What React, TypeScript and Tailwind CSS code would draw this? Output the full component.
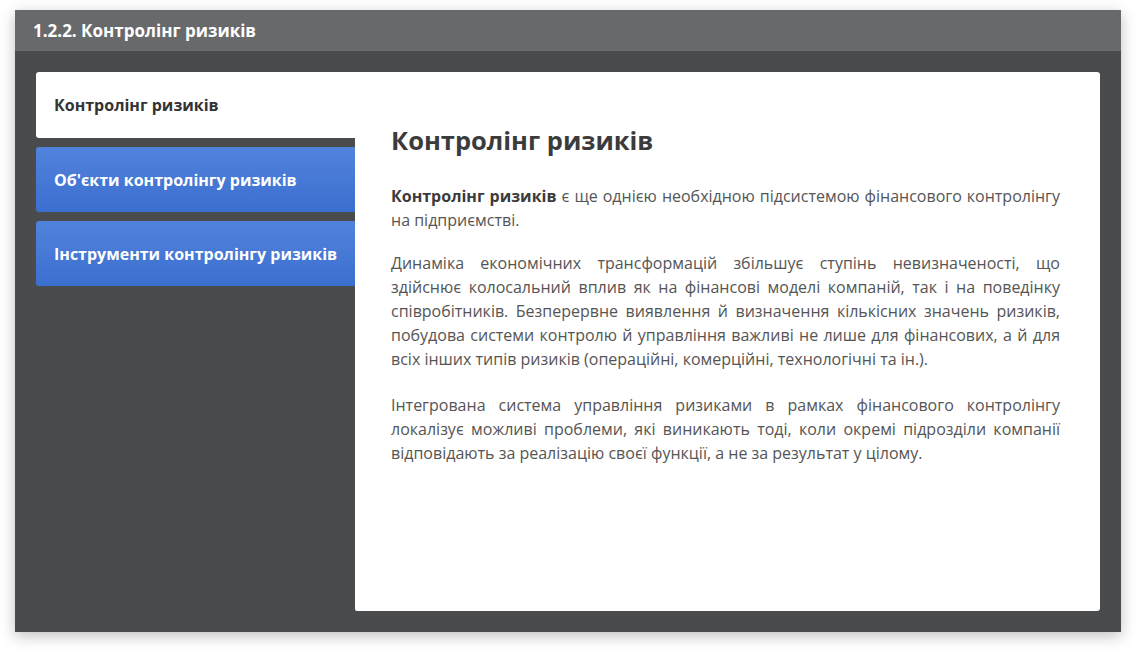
import React from "react";

const tabs = ["Контролінг ризиків", "Об'єкти контролінгу ризиків", "Інструменти контролінгу ризиків"];

export default function App() {
  return (
    <div className="min-h-screen bg-white pl-[15px] pt-[10px]" style={{ fontFamily: '"Open Sans", "Noto Sans", sans-serif' }}>
      <div className="w-[1106px] h-[622px] bg-[#4a4b4d] flex flex-col shadow-[0_4px_14px_rgba(0,0,0,0.25)]">
        <header className="h-[41px] bg-[#67696b] flex items-center px-[18px] shrink-0">
          <h1 className="text-white font-bold text-[17px]">1.2.2. Контролінг ризиків</h1>
        </header>

        <div className="flex flex-1 pt-[21px] pb-[21px] pl-[21px] pr-[21px]">
          <nav className="w-[319px] flex flex-col gap-[9px] shrink-0">
            {tabs.map((t, i) =>
              i === 0 ? (
                <div key={t} className="h-[66px] bg-white rounded-l-[3px] flex items-center pl-[18px] text-[16px] font-bold text-[#333]">
                  {t}
                </div>
              ) : (
                <div
                  key={t}
                  className="h-[65px] rounded-l-[3px] flex items-center pl-[18px] text-[16px] font-bold text-white bg-gradient-to-b from-[#5283dc] to-[#3b6fcf]"
                >
                  {t}
                </div>
              )
            )}
          </nav>

          <main className="flex-1 bg-white rounded-r-[3px] rounded-bl-[2px] pl-[36px] pr-[40px] pt-[50px]">
            <h2 className="text-[25.5px] leading-[36px] font-bold text-[#3b3b3b] mb-[26px]">Контролінг ризиків</h2>
            <div className="text-[16px] leading-[24px] text-[#555] text-justify">
              <p className="mb-[19px]">
                <b className="text-[#3b3b3b]">Контролінг ризиків</b> є ще однією необхідною підсистемою фінансового контролінгу на підприємстві.
              </p>
              <p className="mb-[22px]">
                Динаміка економічних трансформацій збільшує ступінь невизначеності, що здійснює колосальний вплив як на фінансові моделі компаній, так і на поведінку співробітників. Безперервне виявлення й визначення кількісних значень ризиків, побудова системи контролю й управління важливі не лише для фінансових, а й для всіх інших типів ризиків (операційні, комерційні, технологічні та ін.).
              </p>
              <p>
                Інтегрована система управління ризиками в рамках фінансового контролінгу локалізує можливі проблеми, які виникають тоді, коли окремі підрозділи компанії відповідають за реалізацію своєї функції, а не за результат у цілому.
              </p>
            </div>
          </main>
        </div>
      </div>
    </div>
  );
}
